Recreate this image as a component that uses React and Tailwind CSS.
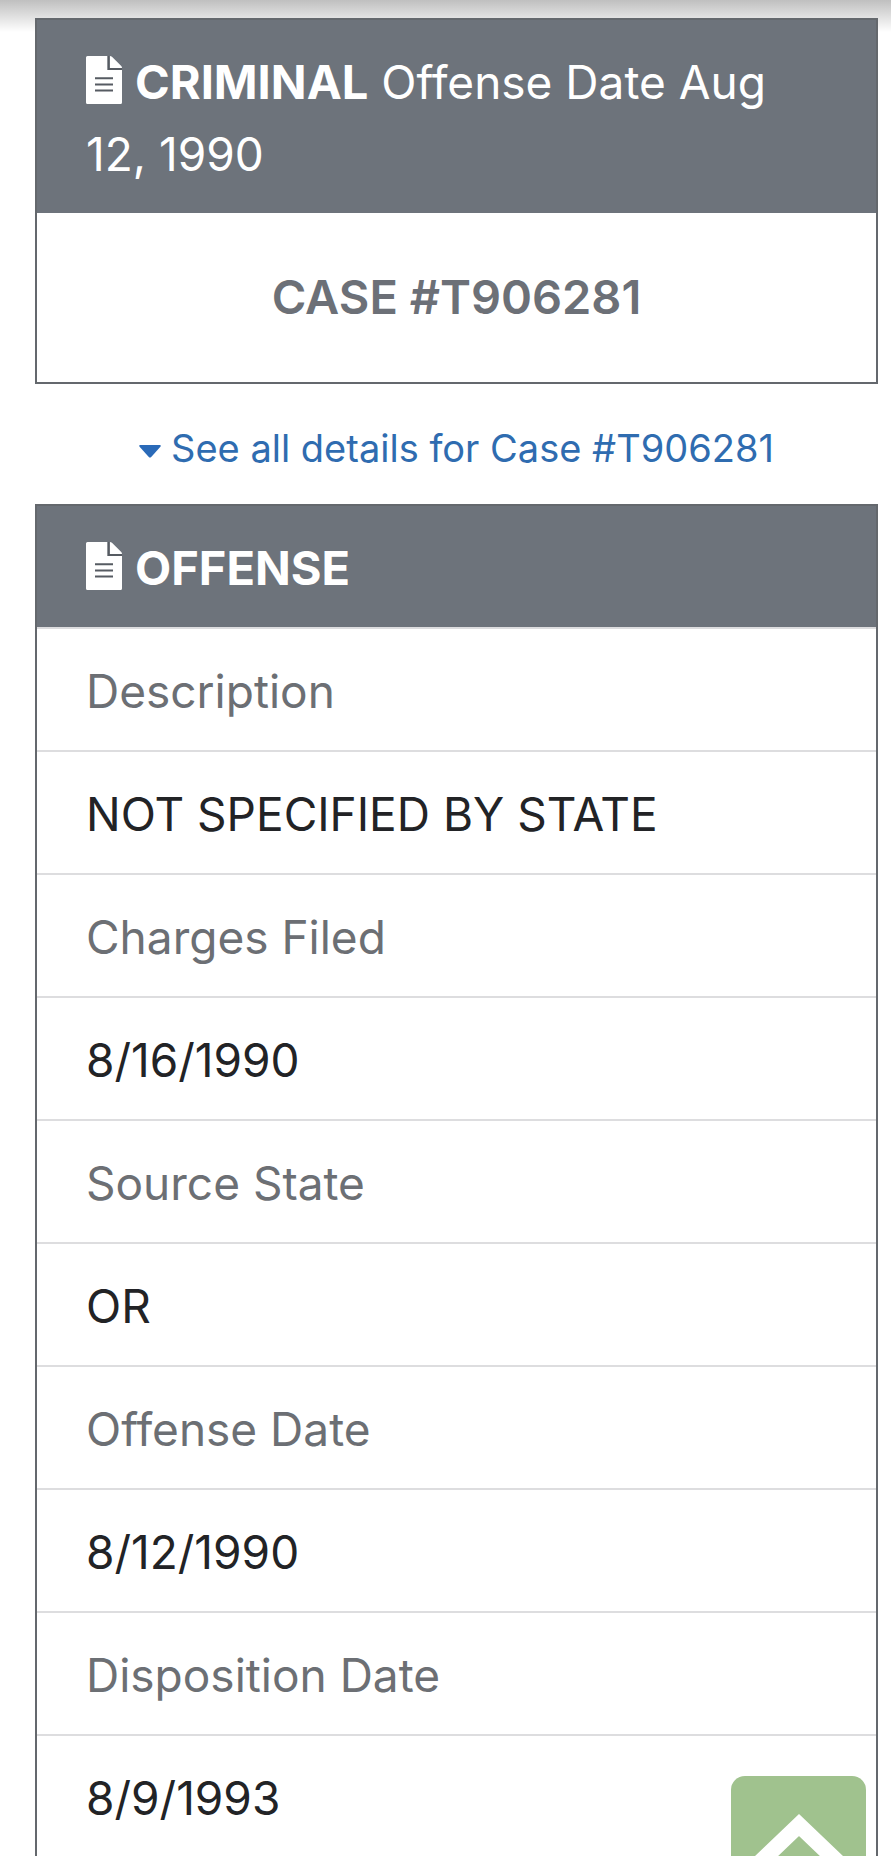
const details = [
  ["Description", "NOT SPECIFIED BY STATE"],
  ["Charges Filed", "8/16/1990"],
  ["Source State", "OR"],
  ["Offense Date", "8/12/1990"],
  ["Disposition Date", "8/9/1993"],
];

function FileIcon() {
  return (
    <svg viewBox="0 0 36 48" className="mr-[13px] inline-block h-12 w-9 align-[-5px]" aria-hidden="true">
      <path fill="#fff" d="M1.5 0H21.5V14H36V46.5Q36 48 34.5 48H1.5Q0 48 0 46.5V1.5Q0 0 1.5 0Z" />
      <path fill="#fff" d="M23.8 0Q25.2 0 26.2 1L35 9.8Q36 10.8 36 12H23.8Z" />
      <path stroke="#565b62" strokeWidth="2" fill="none" d="M22.6 0V13H36M9 22.3H27M9 28.4H27M9 34.6H27" />
    </svg>
  );
}

export default function App() {
  return (
    <div className="relative h-screen overflow-hidden bg-white pt-[18px] pr-[13px] pl-[35px] font-['Inter','Liberation_Sans',sans-serif] text-[46px] leading-[72px] text-[#222326]">
      <div className="absolute inset-x-0 top-0 h-8 bg-linear-to-b from-black/25 to-transparent" />

      <section className="relative border-2 border-[#64686d] bg-white">
        <h2 className="bg-[#6d737b] px-[49px] pt-[26px] pb-[23px] text-white">
          <FileIcon />
          <strong className="text-[47px] font-bold">CRIMINAL</strong> Offense Date Aug 12, 1990
        </h2>
        <p className="pt-[48px] pb-[49px] text-center text-[47px] font-semibold text-[#6c7077]">CASE #T906281</p>
      </section>

      <p className="flex justify-center pt-[34px] pb-[26px] text-[38px] leading-[60px]">
        <a href="#details" className="flex items-center gap-[10px] text-[#2f6cb0]">
          <svg viewBox="0 0 22 13" className="mt-[6px] h-[13px] w-[22px]" aria-hidden="true">
            <path fill="#2a6ab8" d="M1.2 0H20.8Q22.4 .4 21.4 1.8L12.2 12Q11 13.2 9.8 12L.6 1.8Q-.4 .4 1.2 0Z" />
          </svg>
          See all details for Case #T906281
        </a>
      </p>

      <section id="details" className="border-2 border-[#64686d] bg-white">
        <h2 className="bg-[#6d737b] px-[49px] pt-[26px] pb-[23px] text-[47px] font-bold text-white">
          <FileIcon />
          OFFENSE
        </h2>
        <dl>
          {details.map(([label, value]) => (
            <div key={label}>
              <dt className="border-t-2 border-[#dddddf] px-[49px] pt-[26px] pb-[23px] text-[#6c6f74]">{label}</dt>
              <dd className="border-t-2 border-[#dddddf] px-[49px] pt-[26px] pb-[23px]">{value}</dd>
            </div>
          ))}
        </dl>
      </section>

      <button type="button" aria-label="Back to top" className="fixed right-[25px] -bottom-[55px] flex size-[135px] justify-center rounded-[14px] bg-[#a0c28e] pt-[36px]">
        <svg viewBox="0 0 100 60" className="h-[60px] w-[100px]" aria-hidden="true">
          <path fill="none" stroke="#fff" strokeWidth="16" d="M5 56L50 13L95 56" />
        </svg>
      </button>
    </div>
  );
}
